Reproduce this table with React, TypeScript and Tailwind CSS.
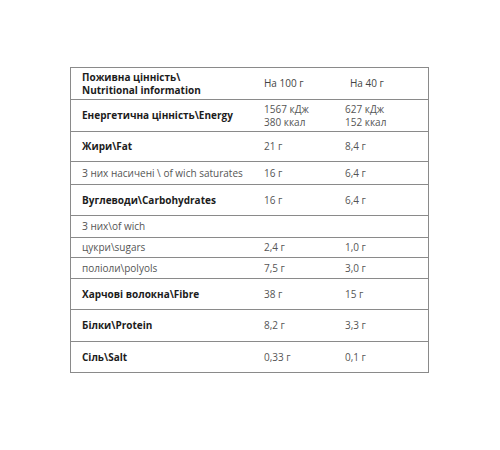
import React from "react";

type Row = { label: string; bold?: boolean; v1: string[]; v2: string[]; h: string };

const rows: Row[] = [
  { label: "Енергетична цінність\\Energy", bold: true, v1: ["1567 кДж", "380 ккал"], v2: ["627 кДж", "152 ккал"], h: "h-[32px]" },
  { label: "Жири\\Fat", bold: true, v1: ["21 г"], v2: ["8,4 г"], h: "h-[30px]" },
  { label: "З них насичені \\ of wich saturates", v1: ["16 г"], v2: ["6,4 г"], h: "h-[23px]" },
  { label: "Вуглеводи\\Carbohydrates", bold: true, v1: ["16 г"], v2: ["6,4 г"], h: "h-[31px]" },
  { label: "З них\\of wich", v1: [""], v2: [""], h: "h-[22px]" },
  { label: "цукри\\sugars", v1: ["2,4 г"], v2: ["1,0 г"], h: "h-[20px]" },
  { label: "поліоли\\polyols", v1: ["7,5 г"], v2: ["3,0 г"], h: "h-[21px]" },
  { label: "Харчові волокна\\Fibre", bold: true, v1: ["38 г"], v2: ["15 г"], h: "h-[31px]" },
  { label: "Білки\\Protein", bold: true, v1: ["8,2 г"], v2: ["3,3 г"], h: "h-[32px]" },
  { label: "Сіль\\Salt", bold: true, v1: ["0,33 г"], v2: ["0,1 г"], h: "h-[31px]" },
];

export default function App() {
  return (
    <div className="w-[500px] h-[450px] bg-white pt-[67px] pl-[70px] font-['Open_Sans',sans-serif] text-[10px] leading-[13px]">
      <div className="w-[359px] border border-[#8a8a8a] flex flex-col">
        <div className="flex items-center h-[31px]">
          <div className="w-[182px] pl-[11px] font-bold text-[#1c1c1c]">
            <div>Поживна цінність\</div>
            <div>Nutritional information</div>
          </div>
          <div className="w-[81px] pl-[11px] text-[#444]">На 100 г</div>
          <div className="flex-1 pl-[16px] text-[#444]">На 40 г</div>
        </div>
        {rows.map((r, i) => (
          <div key={i} className={`flex items-center border-t border-[#8a8a8a] ${r.h}`}>
            <div className={`w-[182px] pl-[11px] ${r.bold ? "font-bold text-[#1c1c1c]" : "text-[#555]"}`}>{r.label}</div>
            <div className="w-[81px] pl-[11px] text-[#555]">
              {r.v1.map((t, j) => (
                <div key={j}>{t}</div>
              ))}
            </div>
            <div className="flex-1 pl-[11px] text-[#555]">
              {r.v2.map((t, j) => (
                <div key={j}>{t}</div>
              ))}
            </div>
          </div>
        ))}
      </div>
    </div>
  );
}
